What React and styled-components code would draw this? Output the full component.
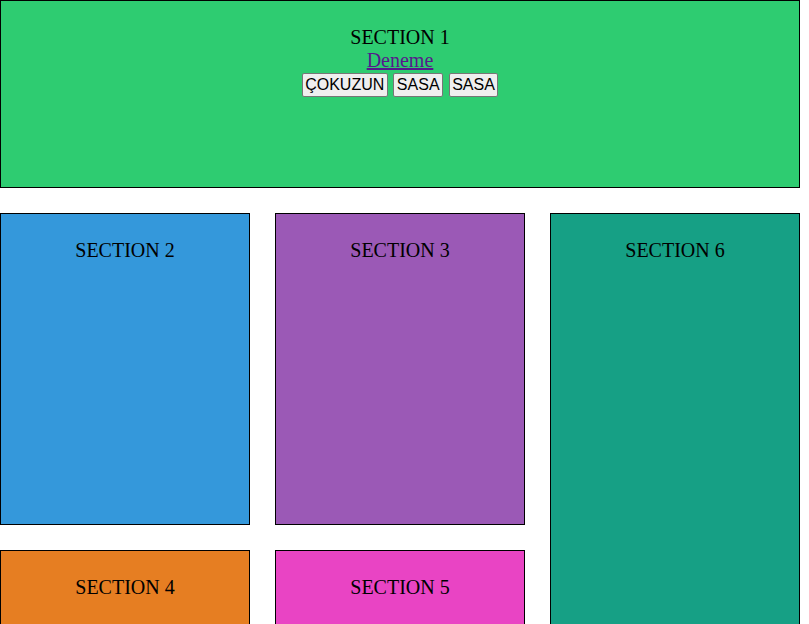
import React from "react";
import styled, { createGlobalStyle } from "styled-components";

const GlobalStyle = createGlobalStyle`
  body {
    margin: 0;
    font-family: "Liberation Serif", "Times New Roman", serif;
    font-size: 20px;
    background: #ffffff;
  }
`;

const Page = styled.div`
  width: 800px;
`;

const Section = styled.section`
  box-sizing: border-box;
  border: 1px solid #000;
  background: ${(p) => p.$color};
  padding: 25px 8px;
  text-align: center;
  color: #000;
  height: ${(p) => p.$height || "auto"};
  grid-row: ${(p) => p.$row || "auto"};
  grid-column: ${(p) => p.$col || "auto"};
`;

const Title = styled.div`
  line-height: 23px;
`;

const Link = styled.a`
  display: block;
  line-height: 23px;
  color: #551a8b;
  text-decoration: underline;
`;

const ButtonRow = styled.div`
  display: flex;
  justify-content: center;
  gap: 5.6px;
  margin-top: 1px;
`;

const Button = styled.button`
  font-family: "Liberation Sans", Arial, sans-serif;
  font-size: 16px;
  line-height: 20px;
  padding: 1px 2.5px;
  border: 1px solid #767676;
  border-radius: 2px;
  background: #efefef;
  color: #000;
`;

const Grid = styled.div`
  display: grid;
  grid-template-columns: repeat(3, 250px);
  grid-template-rows: 312px 220px;
  gap: 25px;
  margin-top: 25px;
`;

export default function App() {
  return (
    <Page>
      <GlobalStyle />
      <Section $color="#2ecc71" $height="188px">
        <Title>SECTION 1</Title>
        <Link href="#">Deneme</Link>
        <ButtonRow>
          <Button>ÇOKUZUN</Button>
          <Button>SASA</Button>
          <Button>SASA</Button>
        </ButtonRow>
      </Section>
      <Grid>
        <Section $color="#3498db" $row="1" $col="1">
          <Title>SECTION 2</Title>
        </Section>
        <Section $color="#9b59b6" $row="1" $col="2">
          <Title>SECTION 3</Title>
        </Section>
        <Section $color="#16a085" $row="1 / span 2" $col="3">
          <Title>SECTION 6</Title>
        </Section>
        <Section $color="#e67e22" $row="2" $col="1">
          <Title>SECTION 4</Title>
        </Section>
        <Section $color="#e944c4" $row="2" $col="2">
          <Title>SECTION 5</Title>
        </Section>
      </Grid>
    </Page>
  );
}
